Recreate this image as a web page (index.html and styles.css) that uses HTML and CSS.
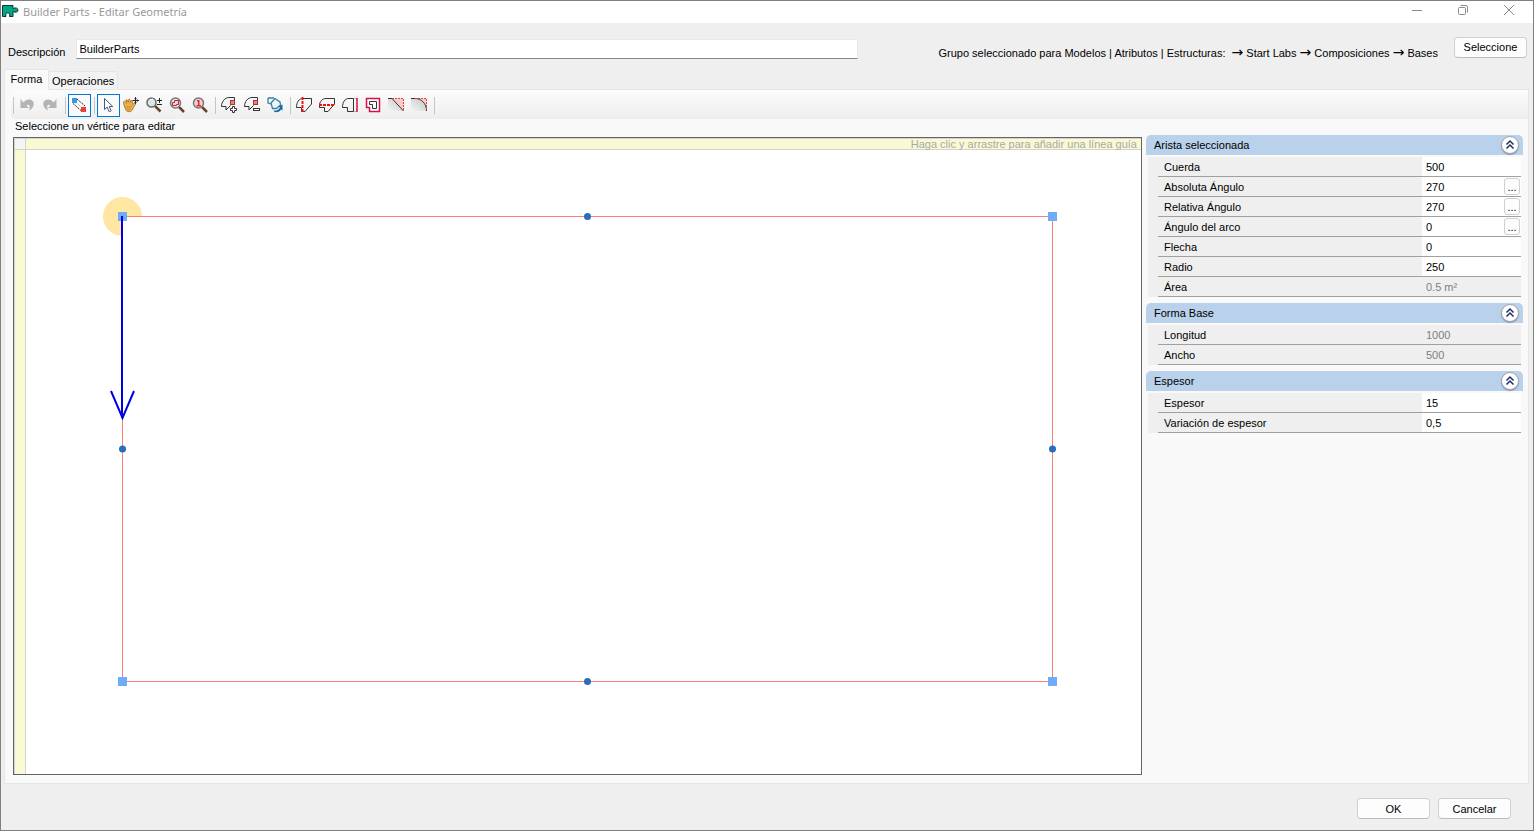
FILE: index.html
```html
<!DOCTYPE html>
<html lang="es">
<head>
    <meta charset="UTF-8">
    <meta name="viewport" content="width=device-width, initial-scale=1.0">
    <title>Builder Parts - Editar Geometría</title>
    <link rel="stylesheet" href="styles.css">
</head>
<body>
<div class="window">

    <!-- Title bar -->
    <header class="titlebar">
        <svg class="logo" width="17" height="14" viewBox="0 0 17 14">
            <path d="M.5 1.500H11v3.200c2.200-1.500 5-.8 5 1.400s-2.800 2.800-5 1.400V12.500H7.500c.8-2.400-.2-3.600-1.800-3.600S3.200 10.100 4 12.500H.5z" fill="#00a88a" stroke="#14322c"/>
        </svg>
        <h1>Builder Parts - Editar Geometría</h1>
        <div class="window-buttons">
            <button aria-label="Minimizar"><svg width="12" height="12" viewBox="0 0 12 12"><path d="M1 6.500h10"/></svg></button>
            <button aria-label="Restaurar"><svg width="12" height="12" viewBox="0 0 12 12"><rect x="1.500" y="3.500" width="7" height="7" rx="1"/><path d="M3.500 1.500h5.500a1.500 1.500 0 0 1 1.500 1.500v5.500"/></svg></button>
            <button aria-label="Cerrar"><svg width="12" height="12" viewBox="0 0 12 12"><path d="M1 1l10 10M11 1L1 11"/></svg></button>
        </div>
    </header>

    <!-- Description and selected group -->
    <div class="description">
        <label for="descripcion">Descripción</label>
        <input type="text" id="descripcion" value="BuilderParts">
        <span class="group">Grupo seleccionado para Modelos | Atributos | Estructuras: &nbsp;<span class="arrow">→</span> Start Labs <span class="arrow">→</span> Composiciones <span class="arrow">→</span> Bases</span>
        <button class="btn">Seleccione</button>
    </div>

    <!-- Tabs -->
    <nav class="tabs" role="tablist">
        <button class="tab active" role="tab" aria-selected="true">Forma</button>
        <button class="tab" role="tab" aria-selected="false">Operaciones</button>
    </nav>

    <main class="panel">
        <!-- Toolbar -->
        <div class="toolbar">
            <span class="grip"></span>
            <button class="tool" title="Deshacer">
                <svg viewBox="0 0 16 16"><path d="M1.500 2v9h8.500L7.500 8.500C9.500 6.500 12 8 10 13.500 16.500 10 16 3 10.500 2.500 8 2.300 6 3.500 4.500 5.500z" fill="#b4b4b4"/></svg>
            </button>
            <button class="tool" title="Rehacer">
                <svg viewBox="0 0 16 16"><path d="M14.500 2v9H6l2.500-2.500C6.500 6.500 4 8 6 13.500-.5 10 0 3 5.500 2.500 8 2.300 10 3.500 11.500 5.500z" fill="#b4b4b4"/></svg>
            </button>
            <span class="sep"></span>
            <button class="tool checked" title="Aristas">
                <svg viewBox="0 0 16 16"><path d="M6 2l8 7M2 6.500l8 7" fill="none" stroke="#222" stroke-dasharray="2 1"/><path d="M4 4l8 8" stroke="#999" stroke-dasharray="1 1"/><rect x="1" y="1" width="5" height="5" fill="#2f9be8"/><rect x="10" y="10" width="5" height="5" fill="#ee4036"/></svg>
            </button>
            <span class="sep"></span>
            <button class="tool checked" title="Seleccionar">
                <svg viewBox="0 0 16 16"><path d="M4.500 1.500v11l2.700-2.400 2 4.700 2-1-2-4.300h3.600z" fill="#fff" stroke="#46587e"/></svg>
            </button>
            <button class="tool" title="Mover">
                <svg viewBox="0 0 16 16"><path d="M.8 4.500c1.200-.6 2 1 2.900 1.700L2.800 3c1-.9 1.800.2 2.700 2.300-.4-2-.1-3.300.9-3 .9.200 1 1.700 1.400 3 0-1.600.7-2.200 1.400-1.500.6.600.3 2.300.6 3.500 1-.9 2.600-1.300 3-.4.300.7-1.400 1.600-2 2.900-.8 2-1.500 4.700-4.600 4.900-3 .1-3.700-2-4.500-4.700C1.200 8.500-.2 5.500.8 4.500z" fill="#e8b04e" stroke="#a8691c" stroke-width=".8"/><path d="M3 9.500c2 1.200 4 .7 6-.5M4 12c1.500.6 3 .5 4-.3" stroke="#c98a2f" fill="none"/><path d="M12.500.5v6M9.500 3.500h6M11.500 1.500l1-1 1 1M11.500 5.500l1 1 1-1M14.500 2.500l1 1-1 1" stroke="#222" fill="none"/></svg>
            </button>
            <button class="tool" title="Zoom">
                <svg viewBox="0 0 16 16"><path d="M9 9l5.500 5.500" stroke="#67452f" stroke-width="2.500"/><circle cx="5.500" cy="5.500" r="4.500" fill="#dce5e8" stroke="#6a6a6a" stroke-width="1.500"/><path d="M4 3l3-1" stroke="#fff"/><path d="M11 3.500h5M13.500 1v5M11 7.500h5" stroke="#222"/></svg>
            </button>
            <button class="tool" title="Zoom a ventana">
                <svg viewBox="0 0 16 16"><path d="M10 10l5 5" stroke="#67452f" stroke-width="2.500"/><circle cx="6.500" cy="6" r="5" fill="#e9e6e6" stroke="#777" stroke-width="1.500"/><path d="M3.500 8.500v-3h2v-2h4v4h-2v1z" fill="#f2d6d6" stroke="#c7203d"/></svg>
            </button>
            <button class="tool" title="Zoom 1:1">
                <svg viewBox="0 0 16 16"><path d="M10 10l5 5" stroke="#67452f" stroke-width="2.500"/><circle cx="6.500" cy="6" r="5" fill="#f8cfcf" stroke="#777" stroke-width="1.500"/><path d="M5 3h2.500v5H9v1.500H4.500V8H6V4.500H5z" fill="#e8272c"/></svg>
            </button>
            <span class="sep"></span>
            <button class="tool" title="Añadir vértice">
                <svg viewBox="0 0 16 16"><path d="M13.500 3V.5H8C4 .5.500 4.500.500 9.500H5V13l4.500-4.500" class="outline"/><rect x="9.500" y="3.500" width="4" height="4" fill="#f27c78" stroke="#a03a3a"/><path d="M11.500 9.500h2v2h2v2h-2v2h-2v-2h-2v-2h2z" class="outline white"/></svg>
            </button>
            <button class="tool" title="Eliminar vértice">
                <svg viewBox="0 0 16 16"><path d="M13.500 3V.5H8C4 .5.500 4.500.500 9.500H5V13l4.500-4.500" class="outline"/><rect x="9.500" y="3.500" width="4" height="4" fill="#f27c78" stroke="#a03a3a"/><rect x="9.500" y="11.500" width="6" height="2" class="outline white"/></svg>
            </button>
            <button class="tool" title="Girar forma">
                <svg viewBox="0 0 16 16"><path d="M1 1h6M1 1v5l3 1" fill="none" stroke="#397fa2" stroke-width="1.300"/><path d="M4 6l4-4.500L13 5l.5 3-4 3.500H5.500z" fill="#eef8fc" stroke="#397fa2" stroke-width="1.300"/><path d="M15.500 7.500v6l-1.500-1c-1 2-3.500 3-6.500 2.500l-1-1.500c3 .5 5.500-.5 6.500-3l-1.500-1z" fill="#1268a8"/></svg>
            </button>
            <span class="sep"></span>
            <button class="tool" title="Dividir vertical">
                <svg viewBox="0 0 16 16"><path d="M.5 10.500C.5 5 3 1.500 7 1.500h8.500V7L9 14.500H5.500v-4z" class="outline"/><path d="M6.500 0v16" class="cut"/></svg>
            </button>
            <button class="tool" title="Dividir horizontal">
                <svg viewBox="0 0 16 16"><path d="M.5 8.500C.5 5 3 1.500 7 1.500h8.500V7L9 14.500H5.500v-4H.5z" class="outline"/><path d="M0 8h16" class="cut"/></svg>
            </button>
            <button class="tool" title="Extender arista">
                <svg viewBox="0 0 16 16"><path d="M.5 10.500C.5 5 3 1.500 7 1.500h4.500v13h-6v-4z" class="outline"/><path d="M12 1.500h3M12 14.500h3" stroke="#f0a0aa"/><path d="M15 1v14" stroke="#d8103f" stroke-width="1.500"/></svg>
            </button>
            <button class="tool" title="Desfase">
                <svg viewBox="0 0 16 16"><path d="M1.500 1.500h13v13h-10v-4h-3z" fill="#fff" stroke="#d8104a" stroke-width="1.500"/><path d="M4.500 4.500h7v7h-4v-4h-3z" class="outline"/></svg>
            </button>
            <button class="tool" title="Chaflán">
                <svg viewBox="0 0 16 16"><path d="M0 2h4l11 11v1H0z" fill="url(#fade)"/><path d="M4 1.500h11.500V14z" fill="#f9caca"/><path d="M0 1.500h4l11.500 12.500" class="outline"/><path d="M4 1.500h11.500V13" fill="none" stroke="#d9464a" stroke-dasharray="2 1"/></svg>
            </button>
            <button class="tool" title="Redondeo">
                <svg viewBox="0 0 16 16"><path d="M0 2h4c6 0 11 4 11 12H0z" fill="url(#fade)"/><path d="M4 1.500h11.500V14C15.500 6 10 1.500 4 1.500z" fill="#f9caca"/><path d="M0 1.500h4C10 1.500 15.500 6 15.500 14" class="outline"/><path d="M4 1.500h11.500V13" fill="none" stroke="#d9464a" stroke-dasharray="2 1"/></svg>
            </button>
            <span class="sep"></span>
            <svg class="defs" width="0" height="0">
                <linearGradient id="fade" x1="0" y1="1" x2="1" y2="0"><stop offset="0" stop-color="#f5f5f5"/><stop offset="1" stop-color="#c4c8c8"/></linearGradient>
            </svg>
        </div>

        <p class="hint">Seleccione un vértice para editar</p>

        <div class="workspace">
            <!-- Drawing area with rulers -->
            <section class="canvas">
                <div class="corner"></div>
                <div class="ruler-top">Haga clic y arrastre para añadir una línea guía</div>
                <div class="ruler-left"></div>
                <svg class="drawing" viewBox="0 0 1115 624">
                    <path d="M96.500 66.500V86A19.500 19.500 0 1 1 116 66.500z" fill="#ffe6a2"/>
                    <rect x="96.500" y="66.500" width="930" height="465" fill="none" stroke="#fa8072"/>
                    <g fill="#6eacfa">
                        <rect x="92" y="62" width="9" height="9"/>
                        <rect x="1022" y="62" width="9" height="9"/>
                        <rect x="92" y="527" width="9" height="9"/>
                        <rect x="1022" y="527" width="9" height="9"/>
                    </g>
                    <g fill="#2a6cbe">
                        <circle cx="561.500" cy="66.500" r="3.500"/>
                        <circle cx="96.500" cy="299" r="3.500"/>
                        <circle cx="1026.500" cy="299" r="3.500"/>
                        <circle cx="561.500" cy="531.500" r="3.500"/>
                    </g>
                    <path d="M96 66V268M85 241L96.500 268 108 241" fill="none" stroke="#0000e6" stroke-width="2"/>
                </svg>
            </section>

            <!-- Properties -->
            <aside class="properties">
                <section class="group-box">
                    <h2>Arista seleccionada <button class="collapse" aria-label="Contraer"><svg viewBox="0 0 18 18"><path d="M5.500 8.500L9 5l3.500 3.500M5.500 12.500L9 9l3.500 3.500"/></svg></button></h2>
                    <div class="rows">
                        <div class="row"><label for="cuerda">Cuerda</label><input type="text" id="cuerda" value="500"></div>
                        <div class="row"><label for="absoluta">Absoluta Ángulo</label><input type="text" id="absoluta" value="270"><button class="more">...</button></div>
                        <div class="row"><label for="relativa">Relativa Ángulo</label><input type="text" id="relativa" value="270"><button class="more">...</button></div>
                        <div class="row"><label for="arco">Ángulo del arco</label><input type="text" id="arco" value="0"><button class="more">...</button></div>
                        <div class="row"><label for="flecha">Flecha</label><input type="text" id="flecha" value="0"></div>
                        <div class="row"><label for="radio">Radio</label><input type="text" id="radio" value="250"></div>
                        <div class="row"><label for="area">Área</label><input type="text" id="area" value="0.5 m²" disabled></div>
                    </div>
                </section>

                <section class="group-box">
                    <h2>Forma Base <button class="collapse" aria-label="Contraer"><svg viewBox="0 0 18 18"><path d="M5.500 8.500L9 5l3.500 3.500M5.500 12.500L9 9l3.500 3.500"/></svg></button></h2>
                    <div class="rows">
                        <div class="row"><label for="longitud">Longitud</label><input type="text" id="longitud" value="1000" disabled></div>
                        <div class="row"><label for="ancho">Ancho</label><input type="text" id="ancho" value="500" disabled></div>
                    </div>
                </section>

                <section class="group-box">
                    <h2>Espesor <button class="collapse" aria-label="Contraer"><svg viewBox="0 0 18 18"><path d="M5.500 8.500L9 5l3.500 3.500M5.500 12.500L9 9l3.500 3.500"/></svg></button></h2>
                    <div class="rows">
                        <div class="row"><label for="espesor">Espesor</label><input type="text" id="espesor" value="15"></div>
                        <div class="row"><label for="variacion">Variación de espesor</label><input type="text" id="variacion" value="0,5"></div>
                    </div>
                </section>
            </aside>
        </div>
    </main>

    <footer class="actions">
        <button class="btn">OK</button>
        <button class="btn">Cancelar</button>
    </footer>
</div>
</body>
</html>
```
FILE: styles.css
```css
/* Basic styling for the page */
* {
    box-sizing: border-box;
}

body {
    margin: 0;
    background-color: white;
    color: black;
}

body, button, input {
    font-family: "Liberation Sans", Arial, sans-serif;
    font-size: 11px;
}

h1, h2, p {
    margin: 0;
    font-weight: normal;
}

.window {
    display: flex;
    flex-direction: column;
    min-height: calc(100vh - 4px);
    margin-right: 4px;
    border: 1px solid #808080;
    background-color: #efefef;
}

/* Title bar */
.titlebar {
    display: flex;
    align-items: center;
    height: 22px;
    padding: 0 1px 2px;
    background-color: white;
}

.titlebar h1 {
    flex: 1;
    margin-left: 4px;
    font-family: "Noto Sans", "Open Sans", sans-serif;
    font-size: 11px;
    color: #999;
}

.window-buttons {
    display: flex;
    height: 18px;
    align-self: flex-start;
}

.window-buttons button {
    width: 46px;
    padding: 0;
    border: none;
    background: none;
}

.window-buttons svg {
    display: block;
    margin: 0 auto;
    fill: none;
    stroke: #8a8a8a;
}

/* Description row */
.description {
    display: flex;
    align-items: center;
    height: 46px;
    padding-top: 12px;
}

.description label {
    margin-left: 7px;
}

.description input {
    width: 51%;
    height: 20px;
    margin: 0 auto 6px 11px;
    padding: 0 2px;
    border: 1px solid #e8e8e8;
    border-bottom-color: #868686;
    background-color: white;
}

.description .btn {
    width: 73px;
    margin: 0 6px 10px 16px;
}

.arrow {
    font-family: "DejaVu Sans", sans-serif;
    font-size: 14px;
    line-height: 1;
}

.btn {
    height: 21px;
    padding: 0;
    border: 1px solid #d0d0d0;
    border-bottom-color: #bcbcbc;
    border-radius: 4px;
    background-color: #fdfdfd;
    color: black;
}

/* Tabs */
.tabs {
    display: flex;
    align-items: flex-end;
    height: 20px;
    padding-left: 3px;
}

.tab {
    height: 18px;
    padding: 0 3px;
    border: 1px solid #e5e5e5;
    border-left: none;
    border-bottom: none;
    background-color: #f3f3f3;
    color: black;
}

.tab.active {
    width: 45px;
    height: 21px;
    margin-bottom: -1px;
    padding-bottom: 3px;
    border-left: 1px solid #e5e5e5;
    background-color: #f9f9f9;
    z-index: 1;
}

.panel {
    flex: 1;
    display: flex;
    flex-direction: column;
    margin: 0 4px 0 3px;
    padding-bottom: 8px;
    border: 1px solid #e5e5e5;
    background-color: #f9f9f9;
}

/* Toolbar */
.toolbar {
    display: flex;
    align-items: center;
    height: 29px;
    margin-left: 6px;
    padding: 3px 2px 1px;
    border-radius: 4px 0 0 4px;
    background: linear-gradient(#fcfcfc, #eee);
}

.grip {
    width: 3px;
    height: 17px;
    border-left: 1px solid #c4c4c4;
}

.sep {
    width: 6px;
    height: 17px;
    background: linear-gradient(#c4c4c4, #c4c4c4) center / 1px 100% no-repeat;
}

.tool {
    width: 23px;
    height: 23px;
    padding: 0;
    border: 1px solid transparent;
    background: none;
}

.tool.checked {
    border-color: #0078d7;
    background-color: #fafafa;
}

.tool svg {
    display: block;
    width: 16px;
    height: 16px;
    margin: 0 2px 1px;
}

.outline {
    fill: none;
    stroke: #333;
}

.outline.white {
    fill: white;
}

.cut {
    fill: none;
    stroke: #f01414;
    stroke-width: 2;
    stroke-dasharray: 3 1;
}

.defs {
    position: absolute;
}

.hint {
    height: 18px;
    padding-left: 10px;
    line-height: 15px;
}

.workspace {
    flex: 1;
    display: flex;
    gap: 4px;
    padding: 0 5px 0 8px;
}

/* Drawing area */
.canvas {
    flex: 1;
    display: grid;
    grid-template-columns: 12px 1fr;
    grid-template-rows: 12px 1fr;
    min-width: 0;
    border: 1px solid #646464;
    background-color: white;
}

.corner, .ruler-top, .ruler-left {
    border: 0 solid #d3d3d3;
    background-color: #fafad2;
}

.corner {
    border-width: 1px;
    background-color: #f5f5f5;
}

.ruler-top {
    border-width: 1px 0;
    padding-right: 4px;
    line-height: 11px;
    text-align: right;
    color: #a9a9a9;
}

.ruler-left {
    border-width: 0 1px;
}

.drawing {
    display: block;
    width: 100%;
    height: 100%;
    min-height: 0;
}

/* Properties */
.properties {
    width: 377px;
    margin-top: -2px;
}

.group-box {
    margin-bottom: 6px;
}

.group-box h2 {
    display: flex;
    align-items: center;
    justify-content: space-between;
    height: 20px;
    margin-bottom: 2px;
    padding: 0 4px 1px 8px;
    border-radius: 5px 5px 0 0;
    background-color: #b9d1ea;
    font-size: 11px;
}

.collapse {
    width: 18px;
    height: 18px;
    padding: 0;
    border: 1px solid #a0a4ac;
    border-radius: 50%;
    background-color: white;
    box-shadow: 0 1px 1px #8c98a8;
}

.collapse svg {
    display: block;
    width: 18px;
    height: 18px;
    margin: -1px;
    fill: none;
    stroke: #1c2f66;
    stroke-width: 1.500;
}

.rows {
    margin: 0 2px;
    padding-left: 10px;
    background-color: #efefef;
}

.row {
    display: flex;
    align-items: center;
    position: relative;
    height: 20px;
    border-bottom: 1px solid #a0a0a0;
}

.row label {
    flex: 1;
    padding-left: 6px;
}

.row input {
    width: 99px;
    height: 19px;
    padding: 0 4px;
    border: none;
    background-color: white;
    color: black;
}

.row input:disabled {
    background-color: transparent;
    color: #808080;
}

/* Button over the right end of the value box */
.more {
    position: absolute;
    right: 1px;
    top: 1px;
    width: 16px;
    height: 17px;
    padding: 0;
    border: 1px solid #d0d0d0;
    border-radius: 3px;
    background-color: #fdfdfd;
    color: black;
}

/* Bottom buttons */
.actions {
    display: flex;
    justify-content: flex-end;
    gap: 8px;
    padding: 14px 22px 11px;
}

.actions .btn {
    width: 73px;
}
```
